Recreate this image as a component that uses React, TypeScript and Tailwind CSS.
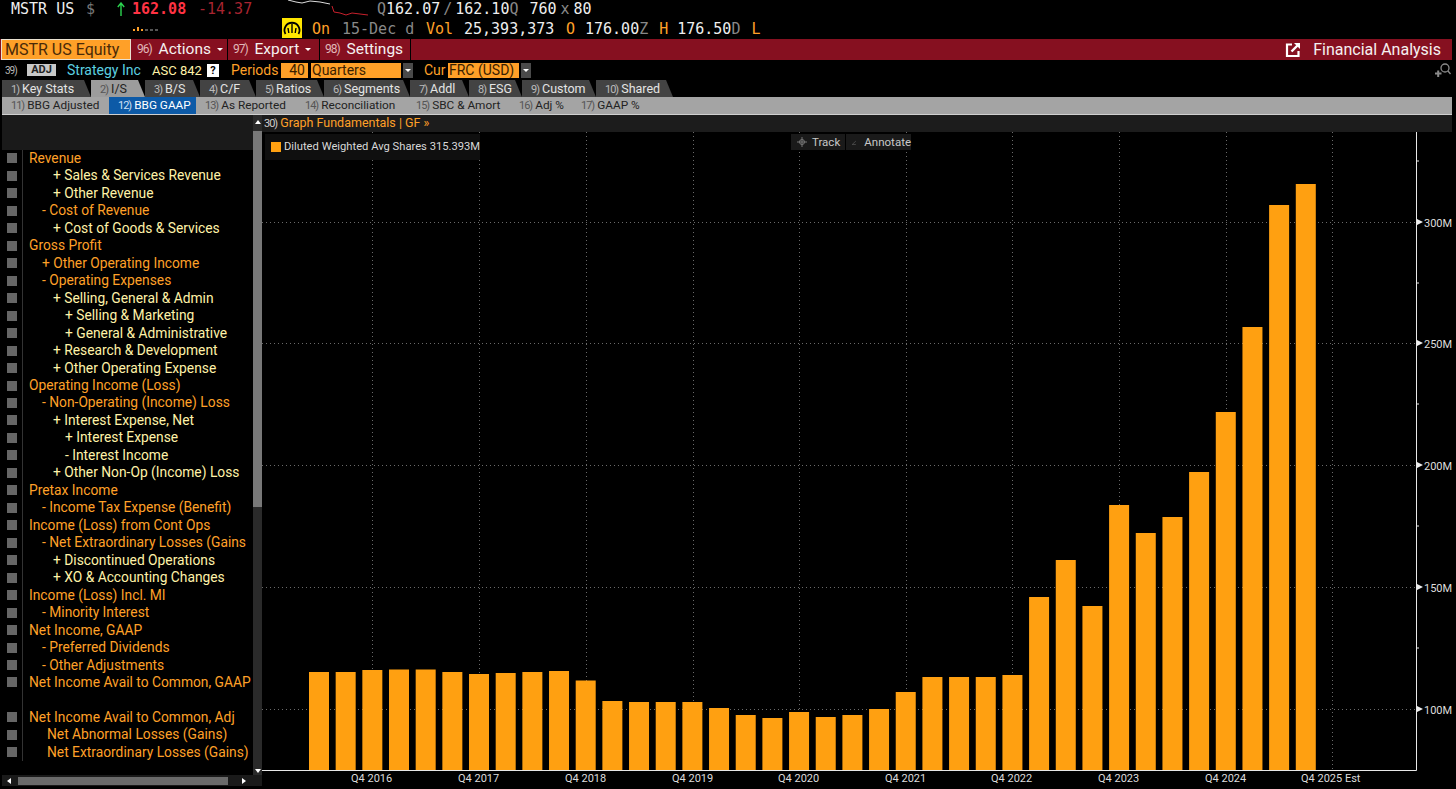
const ui = 'Roboto, "Noto Sans", sans-serif';

const rows: [string, number, 'o' | 'y' | 'x'][] = [
  ['Revenue', 0, 'o'],
  ['+ Sales & Services Revenue', 24, 'y'],
  ['+ Other Revenue', 24, 'y'],
  ['- Cost of Revenue', 13, 'o'],
  ['+ Cost of Goods & Services', 24, 'y'],
  ['Gross Profit', 0, 'o'],
  ['+ Other Operating Income', 13, 'o'],
  ['- Operating Expenses', 13, 'o'],
  ['+ Selling, General & Admin', 24, 'y'],
  ['+ Selling & Marketing', 36, 'y'],
  ['+ General & Administrative', 36, 'y'],
  ['+ Research & Development', 24, 'y'],
  ['+ Other Operating Expense', 24, 'y'],
  ['Operating Income (Loss)', 0, 'o'],
  ['- Non-Operating (Income) Loss', 13, 'o'],
  ['+ Interest Expense, Net', 24, 'y'],
  ['+ Interest Expense', 36, 'y'],
  ['- Interest Income', 36, 'y'],
  ['+ Other Non-Op (Income) Loss', 24, 'y'],
  ['Pretax Income', 0, 'o'],
  ['- Income Tax Expense (Benefit)', 13, 'o'],
  ['Income (Loss) from Cont Ops', 0, 'o'],
  ['- Net Extraordinary Losses (Gains', 13, 'o'],
  ['+ Discontinued Operations', 24, 'y'],
  ['+ XO & Accounting Changes', 24, 'y'],
  ['Income (Loss) Incl. MI', 0, 'o'],
  ['- Minority Interest', 13, 'o'],
  ['Net Income, GAAP', 0, 'o'],
  ['- Preferred Dividends', 13, 'o'],
  ['- Other Adjustments', 13, 'o'],
  ['Net Income Avail to Common, GAAP', 0, 'o'],
  ['', 0, 'x'],
  ['Net Income Avail to Common, Adj', 0, 'o'],
  ['Net Abnormal Losses (Gains)', 18, 'o'],
  ['Net Extraordinary Losses (Gains)', 18, 'o'],
];

const tabs: [string, string, number][] = [
  ['1)', 'Key Stats', 89],
  ['2)', 'I/S', 54],
  ['3)', 'B/S', 55],
  ['4)', 'C/F', 56],
  ['5)', 'Ratios', 68],
  ['6)', 'Segments', 86],
  ['7)', 'Addl', 59],
  ['8)', 'ESG', 53],
  ['9)', 'Custom', 74],
  ['10)', 'Shared', 77],
];

const subTabs: [string, string, number][] = [
  ['11)', 'BBG Adjusted', 107],
  ['12)', 'BBG GAAP', 87],
  ['13)', 'As Reported', 100],
  ['14)', 'Reconciliation', 111],
  ['15)', 'SBC & Amort', 103],
  ['16)', 'Adj %', 62],
  ['17)', 'GAAP %', 80],
];

const barTops = [
  672, 672, 670, 669.5, 669.5, 672, 674, 673, 672, 671, 680.5, 701, 702, 702, 702, 708, 715, 718, 712, 717, 715, 709,
  692, 677, 677, 677, 675, 597, 560, 606, 505, 533, 517, 472, 412, 327, 205, 184,
];

const xLabels: [number, string][] = [
  [372, 'Q4 2016'],
  [479, 'Q4 2017'],
  [586, 'Q4 2018'],
  [693, 'Q4 2019'],
  [799, 'Q4 2020'],
  [906, 'Q4 2021'],
  [1012, 'Q4 2022'],
  [1119, 'Q4 2023'],
  [1226, 'Q4 2024'],
  [1332, 'Q4 2025 Est'],
];

const yLabels: [number, string][] = [
  [222, '300M'],
  [343, '250M'],
  [465, '200M'],
  [587, '150M'],
  [709, '100M'],
];

function Gauge() {
  return (
    <svg width="20" height="20" viewBox="0 0 20 20" className="shrink-0 self-start bg-[#ffe600]">
      <path d="M3.5 16 A7.5 7.5 0 1 1 16.5 16" fill="none" stroke="#000" strokeWidth="1.8" />
      <path d="M10 6 V15 M6 10 L6.8 15 M14 10 L13.2 15" stroke="#000" strokeWidth="1.4" />
    </svg>
  );
}

function Caret() {
  return <span className="ml-[6px] inline-block h-0 w-0 border-x-[3px] border-t-[3px] border-x-transparent border-t-white" />;
}

function Tiny({ children, color, size = 11 }: { children: string; color: string; size?: number }) {
  return (
    <span className="mr-[3px] tracking-[-1px]" style={{ color, fontSize: size }}>
      {children}
    </span>
  );
}

function QuoteRows() {
  return (
    <div className="font-['DejaVu_Sans_Mono'] text-[15px] leading-[20px] whitespace-nowrap">
      <div className="relative flex h-[18px] items-center">
        <span className="ml-[11px] w-[75px] text-[#eee]">MSTR US</span>
        <span className="w-[31px] text-[#777]">$</span>
        <svg className="w-[15px]" width="15" height="14" viewBox="0 0 15 14" fill="none" stroke="#2bd44f" strokeWidth="1.4">
          <path d="M4 14 V1.5 M0.8 5 L4 1 L7.2 5" />
        </svg>
        <span className="w-[66px] font-bold text-[#ff3344]">162.08</span>
        <span className="w-[179px] text-[#a82430]">-14.37</span>
        <span className="text-[#888]">Q</span>
        <span className="text-[#eee]">162.07</span>
        <span className="mx-[3px] text-[#888]">/</span>
        <span className="text-[#eee]">162.10</span>
        <span className="mr-[11px] text-[#888]">Q</span>
        <span className="text-[#eee]">760</span>
        <span className="mx-[4px] text-[#888]">x</span>
        <span className="text-[#eee]">80</span>
        {/* sparkline */}
        <svg className="absolute top-0 left-[280px]" width="92" height="18" viewBox="0 0 92 18" fill="none">
          <path d="M8 0 L16 2 L22 3 L30 1 L40 2 L50 4" stroke="#ddd" strokeWidth="1" />
          <path d="M52 6 L54 12 L60 13 L66 15 L72 13 L80 14 L88 15" stroke="#c8202c" strokeWidth="1" />
        </svg>
      </div>
      <div className="flex h-[21px] items-center">
        <span className="ml-[133px] w-[149px]">
          <span className="flex items-end gap-[2px]">
            <i className="h-[2px] w-[2px] bg-[#ffa028]" />
            <i className="h-[4px] w-[2px] bg-[#ffa028]" />
            <i className="h-[2px] w-[2px] bg-[#ffa028]" />
            <i className="h-[2px] w-[3px] bg-[#555]" />
            <i className="h-[2px] w-[3px] bg-[#555]" />
            <i className="h-[2px] w-[3px] bg-[#555]" />
          </span>
        </span>
        <Gauge />
        <span className="ml-[10px] w-[30px] text-[#ffa028]">On</span>
        <span className="w-[84px] text-[#888]">15-Dec d</span>
        <span className="w-[38px] text-[#ffa028]">Vol</span>
        <span className="w-[102px] text-[#eee]">25,393,373</span>
        <span className="w-[19px] text-[#ffa028]">O</span>
        <span className="text-[#eee]">176.00</span>
        <span className="w-[20px] text-[#888]">Z</span>
        <span className="w-[18px] text-[#ffa028]">H</span>
        <span className="text-[#eee]">176.50</span>
        <span className="w-[20px] text-[#888]">D</span>
        <span className="text-[#ffa028]">L</span>
      </div>
    </div>
  );
}

function MenuBar() {
  return (
    <div className="mr-[4px] flex h-[21px] items-stretch bg-[#861020] text-[15.5px] leading-[19px] text-[#f5f0f0]">
      <div className="ml-[1px] w-[130px] border border-[#e8e0d0] bg-[#ffa028] pl-[3px] text-[16px] text-[#4a2a08]">MSTR US Equity</div>
      <div className="flex w-[97px] items-center border-r border-black pl-[6px] whitespace-pre">
        <Tiny color="#e0b8b8" size={12}>96)</Tiny> Actions<Caret />
      </div>
      <div className="flex w-[92px] items-center border-r border-black pl-[5px] whitespace-pre">
        <Tiny color="#e0b8b8" size={12}>97)</Tiny> Export<Caret />
      </div>
      <div className="flex w-[91px] items-center border-r border-black pl-[5px] whitespace-pre">
        <Tiny color="#e0b8b8" size={12}>98)</Tiny> Settings
      </div>
      <div className="ml-auto flex items-center gap-[12px] pr-[11px] text-[16px]">
        <svg width="16" height="16" viewBox="0 0 16 16" fill="none" stroke="#fff">
          <path d="M7 2.5 H2 V14 H13.5 V9" strokeWidth="2.2" />
          <path d="M6.5 9.5 L14 2" strokeWidth="2.4" />
          <path d="M9 1 H15 V7 Z" fill="#fff" stroke="none" />
        </svg>
        <span>Financial Analysis</span>
      </div>
    </div>
  );
}

function OptionsRow() {
  return (
    <div className="flex h-[20px] items-center whitespace-nowrap text-[14px] leading-[17px]">
      <span className="ml-[5px] w-[22px] text-[10px] tracking-[-1px] text-[#bbb]">39)</span>
      <span className="w-[29px] bg-[#c8c8c8] text-center text-[11px] leading-[12px] font-bold text-[#222]">ADJ</span>
      <span className="ml-[11px] w-[85px] text-[#5cd0e0]">Strategy Inc</span>
      <span className="w-[55px] text-[13px] text-[#fff2a8]">ASC 842</span>
      <span className="h-[13px] w-[12px] bg-white text-center text-[11px] leading-[13px] font-bold text-black">?</span>
      <span className="ml-[12px] w-[50px] text-[#ffa028]">Periods</span>
      <span className="h-[15px] w-[27px] bg-[#ffa028] pr-[3px] text-right leading-[15px] text-[#3a2000]">40</span>
      <span className="ml-[3px] h-[15px] w-[90px] bg-[#ffa028] pl-[1px] leading-[15px] text-[#3a2000]">Quarters</span>
      <span className="ml-[2px] flex h-[15px] w-[10px] items-center justify-center bg-[#4a4a4a]">
        <i className="h-0 w-0 border-x-[3px] border-t-[3px] border-x-transparent border-t-white" />
      </span>
      <span className="ml-[11px] w-[24px] text-[#ffa028]">Cur</span>
      <span className="h-[15px] w-[71px] bg-[#ffa028] pl-[1px] leading-[15px] text-[#3a2000]">FRC (USD)</span>
      <span className="ml-[2px] flex h-[15px] w-[10px] items-center justify-center bg-[#4a4a4a]">
        <i className="h-0 w-0 border-x-[3px] border-t-[3px] border-x-transparent border-t-white" />
      </span>
      <svg className="mr-[5px] ml-auto" width="17" height="17" viewBox="0 0 17 17" fill="none" stroke="#8a8a8a">
        <circle cx="11" cy="6" r="4" strokeWidth="1.3" />
        <path d="M14 9 L16.5 12" strokeWidth="1.3" />
        <path d="M1 11.5 H7.5 M4.2 8.5 V15" strokeWidth="2" />
      </svg>
    </div>
  );
}

function TabRows() {
  return (
    <div className="whitespace-nowrap">
      <div className="flex h-[17px] pl-[2px] text-[12.5px] leading-[17px]">
        {tabs.map(([num, label, w], i) => (
          <div
            key={num}
            className={`pl-[9px] [clip-path:polygon(0_0,calc(100%-7px)_0,100%_100%,0_100%)] ${
              i === 1 ? 'bg-[#9c9c9c] text-[#222]' : 'bg-[#434343] text-[#e4e4e4]'
            }`}
            style={{ width: w }}
          >
            <Tiny color={i === 1 ? '#555' : '#bbb'}>{num}</Tiny>
            {label}
          </div>
        ))}
      </div>
      <div className="mr-[4px] ml-[2px] flex h-[18px] border-b border-[#d0d0d0] bg-[#a4a4a4] text-[11.8px] leading-[17px] text-[#222]">
        {subTabs.map(([num, label, w], i) => (
          <div
            key={num}
            className={`pl-[9px] ${i === 1 ? 'bg-[#0d5aa7] text-white' : ''}`}
            style={{ width: w }}
          >
            <Tiny color={i === 1 ? '#cfe0f5' : '#555'}>{num}</Tiny>
            {label}
          </div>
        ))}
      </div>
    </div>
  );
}

function SidePanel() {
  return (
    <div className="flex h-full w-[262px] shrink-0 flex-col overflow-hidden">
      <div className="flex min-h-0 flex-1">
        <div className="min-w-0 flex-1">
          <div className="ml-[2px] h-[34.7px] bg-[#1a1a1a]" />
          {rows.map(([label, indent, tone], i) => (
            <div key={i} className="flex h-[17.47px] items-center text-[13.8px] leading-[17px] whitespace-nowrap">
              <div className="flex h-full w-[23px] shrink-0 items-center border-r border-[#333] pl-[7px]">
                {tone !== 'x' && <span className="h-[10px] w-[10px] bg-[#666]" />}
              </div>
              <span
                className={tone === 'y' ? 'text-[#fff2a8]' : 'text-[#ffa028]'}
                style={{ paddingLeft: 6 + indent }}
              >
                {label}
              </span>
            </div>
          ))}
        </div>
        <div className="flex w-[9px] shrink-0 flex-col items-center bg-[#2a2a2a]">
          <i className="mt-[5px] mb-[7px] h-0 w-0 border-x-[3px] border-b-[4px] border-x-transparent border-b-white" />
          <div className="h-[376px] w-full bg-[#787878]" />
          <div className="flex-1" />
          <i className="mb-[2px] h-0 w-0 border-x-[3px] border-t-[4px] border-x-transparent border-t-white" />
        </div>
      </div>
      <div className="mb-[3px] ml-[2px] flex h-[11px] items-center bg-[#1a1a1a]">
        <i className="ml-[5px] h-0 w-0 border-y-[3px] border-r-[4px] border-y-transparent border-r-white" />
        <div className="ml-[7px] h-[8px] w-[210px] bg-[#6a6a6a]" />
        <i className="ml-[14px] h-0 w-0 border-y-[3px] border-l-[4px] border-y-transparent border-l-white" />
      </div>
    </div>
  );
}

function Chart() {
  const minorTicks = [161, 283, 404, 526, 648];
  return (
    <svg className="block" width="1194" height="657" viewBox="262 132 1194 657" fontFamily={ui} fontSize="11">
      {xLabels.map(([x]) => (
        <line key={x} x1={x + 0.5} x2={x + 0.5} y1="132" y2="770" stroke="#6a6a6a" strokeDasharray="1 3" />
      ))}
      {yLabels.map(([y]) => (
        <line key={y} x1="262" x2="1416" y1={y + 0.5} y2={y + 0.5} stroke="#6a6a6a" strokeDasharray="1 3" />
      ))}
      {barTops.map((top, i) => (
        <rect key={i} x={309 + i * 26.67} y={top} width="20" height={770 - top} fill="#ffa011" />
      ))}
      <path d="M262 770.5 H1416.5 V132" fill="none" stroke="#e8e8e8" strokeWidth="1" />
      {minorTicks.map((y) => (
        <line key={y} x1="1417" x2="1419" y1={y} y2={y} stroke="#e8e8e8" />
      ))}
      {yLabels.map(([y, label]) => (
        <g key={label}>
          <path d={`M1417 ${y - 3} L1423 ${y} L1417 ${y + 3} Z`} fill="#eee" />
          <text x="1424" y={y + 4.5} fill="#ddd">
            {label}
          </text>
        </g>
      ))}
      {xLabels.map(([x, label], i) => (
        <text key={label} x={i === 9 ? x - 31 : x - 21} y="782" fill="#ddd">
          {label}
        </text>
      ))}
    </svg>
  );
}

function ChartPanel() {
  return (
    <div className="flex min-w-0 flex-1 flex-col">
      <div className="mr-[4px] h-[17px] bg-[#1c1c1c] pl-[2px] text-[12.5px] leading-[16px] whitespace-nowrap text-[#ffa028]">
        <Tiny color="#ccc">30)</Tiny>Graph Fundamentals | GF »
      </div>
      <div className="relative flex-1">
        <Chart />
        <div className="absolute top-[2px] left-[3px] flex h-[26px] w-[215px] items-center gap-[3px] bg-[#0f0f0f] pl-[6px] text-[11.2px] whitespace-nowrap text-[#d8d8d8]">
          <span className="h-[10px] w-[10px] shrink-0 bg-[#ffa011]" />
          Diluted Weighted Avg Shares 315.393M
        </div>
        <div className="absolute top-[2px] left-[529px] flex h-[16px] gap-px text-[11.5px] leading-[16px] text-[#c8c8c8]">
          <div className="flex w-[54px] items-center gap-[5px] bg-[#1a1a1a] pl-[6px]">
            <svg width="10" height="10" viewBox="0 0 10 10" fill="none" stroke="#777">
              <circle cx="5" cy="5" r="2.5" />
              <path d="M5 0 V10 M0 5 H10" />
            </svg>
            Track
          </div>
          <div className="flex w-[65px] items-center gap-[8px] bg-[#1a1a1a] pl-[6px]">
            <svg width="9" height="9" viewBox="0 0 9 9" fill="none" stroke="#777">
              <path d="M0.5 8.5 L8 1.5 M0.5 8.5 H8" />
            </svg>
            Annotate
          </div>
        </div>
      </div>
    </div>
  );
}

export default function App() {
  return (
    <div className="h-[789px] w-[1456px] overflow-hidden bg-black" style={{ fontFamily: ui }}>
      <QuoteRows />
      <MenuBar />
      <OptionsRow />
      <TabRows />
      <div className="flex h-[674px]">
        <SidePanel />
        <ChartPanel />
      </div>
    </div>
  );
}
